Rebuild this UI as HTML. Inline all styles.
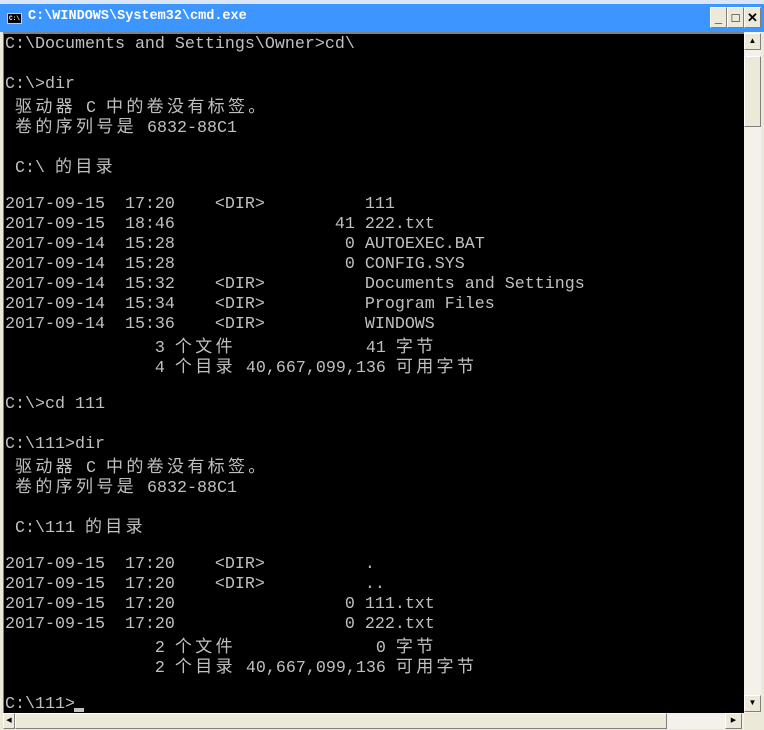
<!DOCTYPE html>
<html><head><meta charset="utf-8"><style>
*{margin:0;padding:0;box-sizing:border-box}
body{width:764px;height:730px;background:#ece9d8;position:relative;overflow:hidden;font-family:"Liberation Sans",sans-serif}
.title{position:absolute;left:0;top:0;width:764px;height:32px;background:#3d95ff;border-top:4px solid #d8e6f8}
.title .t{position:absolute;left:28px;top:5px;color:#fff;font:bold 13.5px "Liberation Mono",monospace}
.ico{position:absolute;left:7px;top:9px;width:15px;height:11px;background:#000;border:1px solid #ccc;color:#fff;font:bold 6px "Liberation Mono",monospace;line-height:9px;padding-left:1px}
.btn{position:absolute;top:3px;width:17px;height:21px;background:#ece9d8;border:1px solid;border-color:#fff #808080 #808080 #fff;font:bold 13px "Liberation Sans",sans-serif;text-align:center;line-height:19px;color:#000}
.con{position:absolute;left:3px;top:32px;width:741px;height:681px;background:#000;border-top:2px solid #808080;border-left:1px solid #808080;overflow:hidden}
.txt{position:absolute;left:1px;top:1px;color:#c0c0c0;font-family:"Liberation Mono",monospace;font-size:16.67px}
.txt div{height:20px;line-height:20px;white-space:pre;overflow:hidden}
.c{font-family:"Noto Sans CJK SC","WenQuanYi Zen Hei",sans-serif;font-size:17px;letter-spacing:3.33px;line-height:20px}
.vs{position:absolute;left:744px;top:32px;width:17px;height:681px;background:#f3f1ea}
.sb{position:absolute;background:#ece9d8;border:1px solid;border-color:#fff #808080 #808080 #fff;font-size:8px;text-align:center;color:#000;line-height:14px}
.hs{position:absolute;left:3px;top:713px;width:741px;height:16px;background:#f3f1ea}
.cur{position:absolute;left:74px;top:708px;width:10px;height:4px;background:#c0c0c0}
</style></head><body>
<div class="title"><div class="ico">C:\</div><div class="t">C:\WINDOWS\System32\cmd.exe</div>
<div class="btn" style="left:710px">_</div><div class="btn" style="left:727px">□</div><div class="btn" style="left:744px">✕</div></div>
<div class="con"><div class="txt">
<div>C:\Documents and Settings\Owner&gt;cd\</div>
<div></div>
<div>C:\&gt;dir</div>
<div> <span class="c">驱动器</span> C <span class="c">中的卷没有标签。</span></div>
<div> <span class="c">卷的序列号是</span> 6832-88C1</div>
<div></div>
<div> C:\ <span class="c">的目录</span></div>
<div></div>
<div>2017-09-15  17:20    &lt;DIR&gt;          111</div>
<div>2017-09-15  18:46                41 222.txt</div>
<div>2017-09-14  15:28                 0 AUTOEXEC.BAT</div>
<div>2017-09-14  15:28                 0 CONFIG.SYS</div>
<div>2017-09-14  15:32    &lt;DIR&gt;          Documents and Settings</div>
<div>2017-09-14  15:34    &lt;DIR&gt;          Program Files</div>
<div>2017-09-14  15:36    &lt;DIR&gt;          WINDOWS</div>
<div>               3 <span class="c">个文件</span>             41 <span class="c">字节</span></div>
<div>               4 <span class="c">个目录</span> 40,667,099,136 <span class="c">可用字节</span></div>
<div></div>
<div>C:\&gt;cd 111</div>
<div></div>
<div>C:\111&gt;dir</div>
<div> <span class="c">驱动器</span> C <span class="c">中的卷没有标签。</span></div>
<div> <span class="c">卷的序列号是</span> 6832-88C1</div>
<div></div>
<div> C:\111 <span class="c">的目录</span></div>
<div></div>
<div>2017-09-15  17:20    &lt;DIR&gt;          .</div>
<div>2017-09-15  17:20    &lt;DIR&gt;          ..</div>
<div>2017-09-15  17:20                 0 111.txt</div>
<div>2017-09-15  17:20                 0 222.txt</div>
<div>               2 <span class="c">个文件</span>              0 <span class="c">字节</span></div>
<div>               2 <span class="c">个目录</span> 40,667,099,136 <span class="c">可用字节</span></div>
<div></div>
<div>C:\111&gt;</div>
</div></div>
<div class="cur"></div>
<div class="vs">
<div class="sb" style="left:0;top:1px;width:17px;height:17px">▲</div>
<div class="sb" style="left:0;top:24px;width:17px;height:71px"></div>
<div class="sb" style="left:0;top:663px;width:17px;height:17px">▼</div>
</div>
<div class="hs">
<div class="sb" style="left:0;top:0;width:12px;height:16px;font-size:7px">◀</div>
<div class="sb" style="left:12px;top:0;width:652px;height:16px"></div>
<div class="sb" style="left:722px;top:0;width:17px;height:16px;font-size:7px">▶</div>
</div>
</body></html>
